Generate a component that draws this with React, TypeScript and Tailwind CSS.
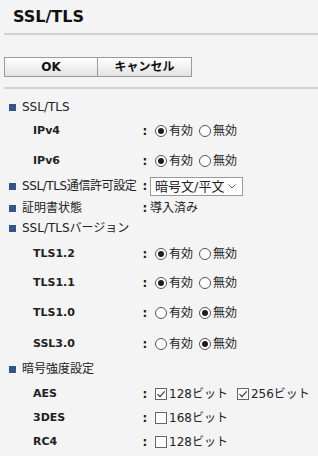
const FONT = { fontFamily: '"DejaVu Sans", "Noto Sans CJK JP", sans-serif' };

function Radio({ on }: { on: boolean }) {
  return (
    <span className="flex h-[12px] w-[12px] shrink-0 items-center justify-center rounded-full border border-[#555] bg-white">
      {on && <span className="h-[6px] w-[6px] rounded-full bg-[#1e1e1e]" />}
    </span>
  );
}

function Check({ on }: { on: boolean }) {
  return (
    <span className="flex h-[12px] w-[12px] shrink-0 items-center justify-center border border-[#666] bg-white">
      {on && (
        <svg width="10" height="10" viewBox="0 0 10 10">
          <path d="M1.5 5.2 L4 7.6 L8.7 2.4" fill="none" stroke="#333" strokeWidth="1.1" />
        </svg>
      )}
    </span>
  );
}

function Heading({ label, mt }: { label: string; mt: string }) {
  return (
    <div className={`flex h-[20px] items-center ${mt}`}>
      <span className="ml-[9px] h-[7px] w-[7px] bg-[#34558b]" />
      <span className="ml-[6px] whitespace-nowrap text-[12px] text-[#222]">{label}</span>
    </div>
  );
}

function Row({ label, mt, children }: { label: string; mt: string; children: React.ReactNode }) {
  return (
    <div className={`flex h-[20px] items-center ${mt}`}>
      <span className="w-[141px] shrink-0 pl-[33px] text-[11px] font-bold text-[#222]">{label}</span>
      <span className="w-[8px] text-center text-[12px] font-bold text-[#222]">:</span>
      <div className="ml-[6px] flex items-center whitespace-nowrap text-[12px] text-[#222]">{children}</div>
    </div>
  );
}

function OnOff({ on }: { on: boolean }) {
  return (
    <>
      <Radio on={on} />
      <span className="ml-[2px]">有効</span>
      <span className="ml-[6px]">
        <Radio on={!on} />
      </span>
      <span className="ml-[2px]">無効</span>
    </>
  );
}

export default function App() {
  return (
    <div className="h-[456px] w-[318px] overflow-hidden bg-[#f4f4f4]" style={FONT}>
      <div className="pl-[13px] pt-[7px] text-[16px] font-bold leading-[20px] text-[#111]">SSL/TLS</div>
      <div className="ml-[4px] mt-[6px] h-[2px] bg-[#d2d2d2]" />

      <div className="ml-[4px] mt-[22px] flex h-[20px] w-[188px]">
        <button className="h-full w-[94px] border border-[#9a9a9a] bg-gradient-to-b from-white to-[#e2e2e2] text-[12px] font-bold text-[#111]">
          OK
        </button>
        <button className="h-full w-[94px] border border-l-0 border-[#9a9a9a] bg-gradient-to-b from-white to-[#e2e2e2] text-[12px] font-bold text-[#111]">
          キャンセル
        </button>
      </div>
      <div className="ml-[4px] mt-[10px] h-[2px] bg-[#d2d2d2]" />

      <Heading label="SSL/TLS" mt="mt-[8px]" />
      <Row label="IPv4" mt="mt-[4px]">
        <OnOff on />
      </Row>
      <Row label="IPv6" mt="mt-[10px]">
        <OnOff on />
      </Row>

      <div className="mt-[5px] flex h-[20px] items-center">
        <span className="ml-[9px] h-[7px] w-[7px] shrink-0 bg-[#34558b]" />
        <span className="ml-[6px] w-[119px] shrink-0 whitespace-nowrap text-[12px] tracking-[-0.4px] text-[#222]">
          SSL/TLS通信許可設定
        </span>
        <span className="w-[8px] text-center text-[12px] font-bold text-[#222]">:</span>
        <div className="ml-[1px] flex h-[19px] w-[93px] items-center justify-between border border-[#9a9a9a] bg-white pl-[4px] pr-[6px]">
          <span className="whitespace-nowrap text-[13px] leading-none text-[#222]">暗号文/平文</span>
          <svg width="8" height="5" viewBox="0 0 8 5">
            <path d="M0.5 0.5 L4 4 L7.5 0.5" fill="none" stroke="#666" strokeWidth="1" />
          </svg>
        </div>
      </div>

      <div className="mt-[2px] flex h-[20px] items-center">
        <span className="ml-[9px] h-[7px] w-[7px] shrink-0 bg-[#34558b]" />
        <span className="ml-[6px] w-[119px] shrink-0 text-[12px] text-[#222]">証明書状態</span>
        <span className="w-[8px] text-center text-[12px] font-bold text-[#222]">:</span>
        <span className="ml-[1px] text-[12px] text-[#222]">導入済み</span>
      </div>

      <Heading label="SSL/TLSバージョン" mt="mt-0" />
      <Row label="TLS1.2" mt="mt-[6px]">
        <OnOff on />
      </Row>
      <Row label="TLS1.1" mt="mt-[9px]">
        <OnOff on />
      </Row>
      <Row label="TLS1.0" mt="mt-[10px]">
        <OnOff on={false} />
      </Row>
      <Row label="SSL3.0" mt="mt-[11px]">
        <OnOff on={false} />
      </Row>

      <Heading label="暗号強度設定" mt="mt-[5px]" />
      <Row label="AES" mt="mt-[5px]">
        <Check on />
        <span className="ml-[2px]">128ビット</span>
        <span className="ml-[9px]">
          <Check on />
        </span>
        <span className="ml-[2px]">256ビット</span>
      </Row>
      <Row label="3DES" mt="mt-[4px]">
        <Check on={false} />
        <span className="ml-[2px]">168ビット</span>
      </Row>
      <Row label="RC4" mt="mt-[4px]">
        <Check on={false} />
        <span className="ml-[2px]">128ビット</span>
      </Row>
    </div>
  );
}
